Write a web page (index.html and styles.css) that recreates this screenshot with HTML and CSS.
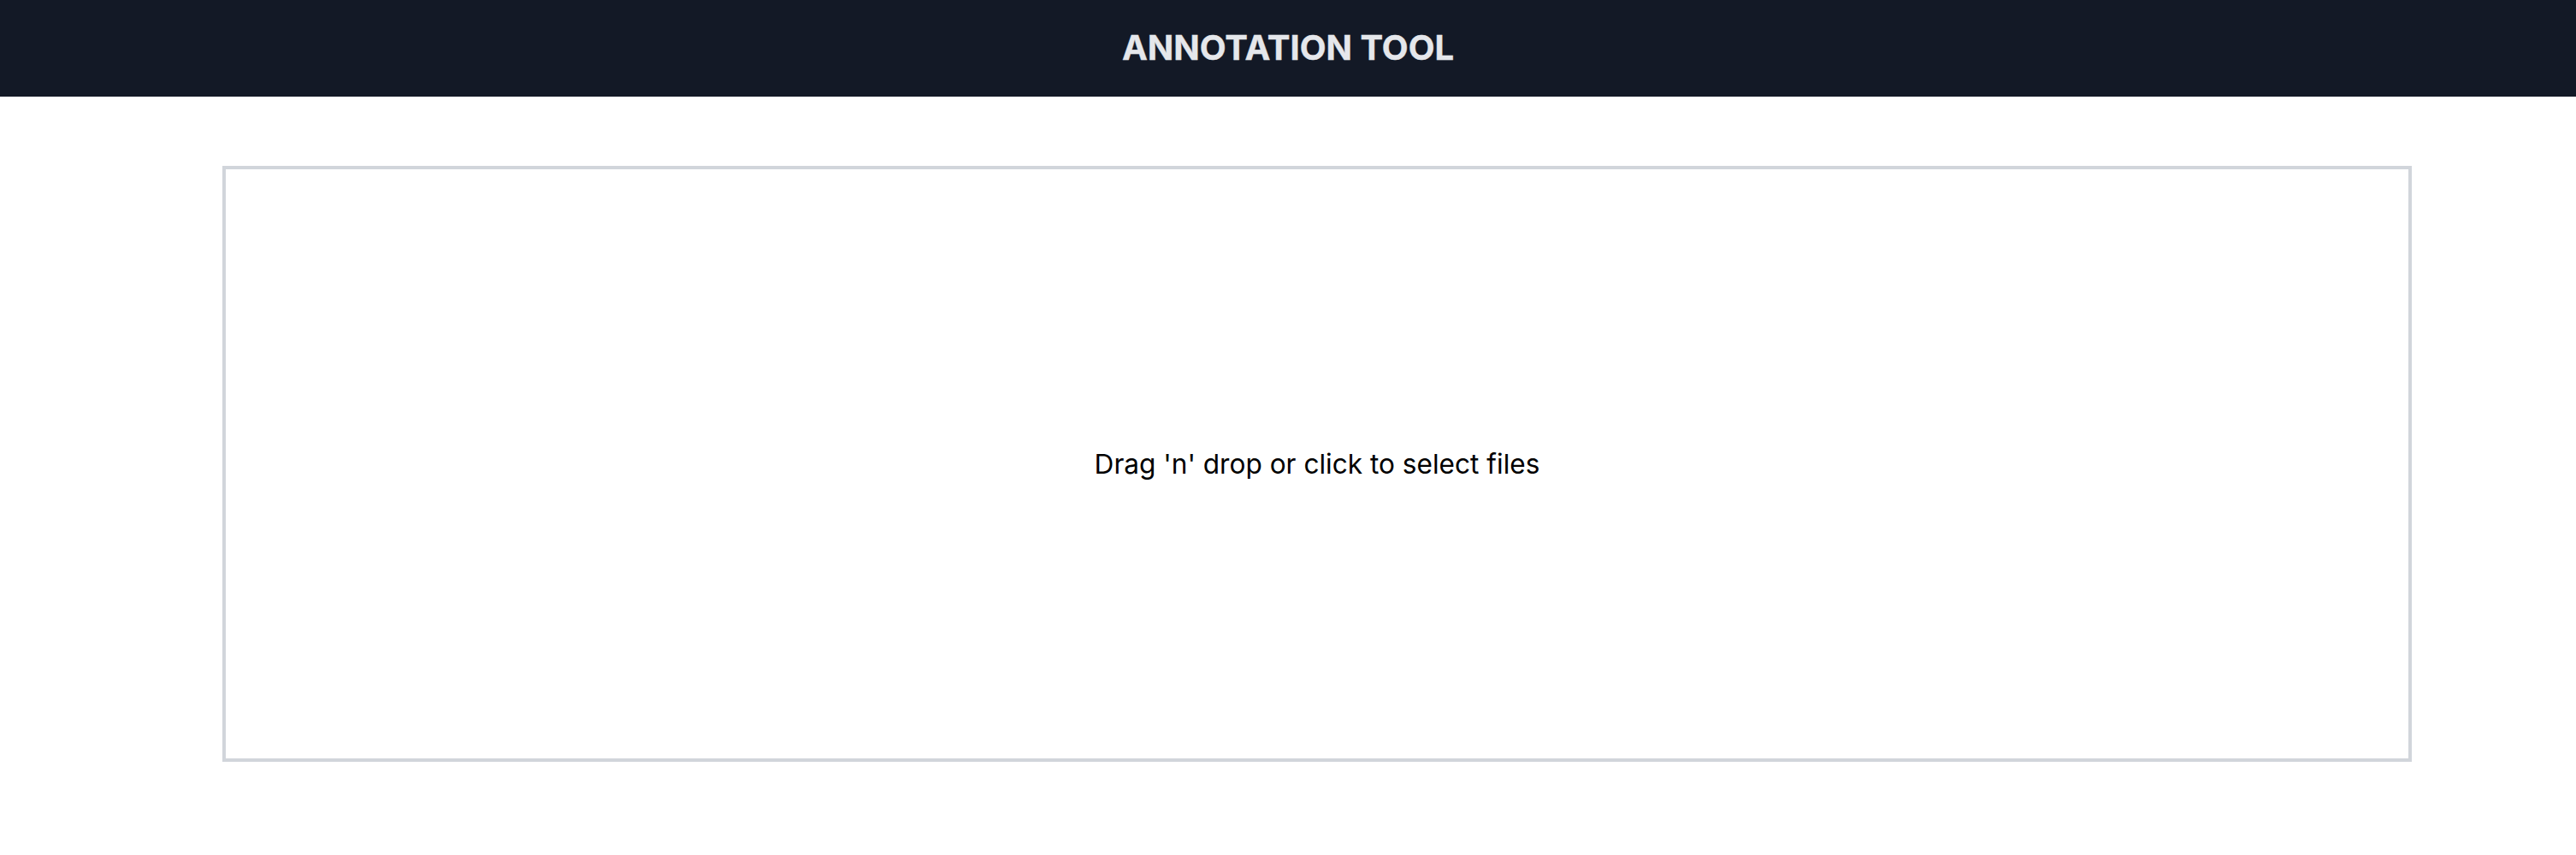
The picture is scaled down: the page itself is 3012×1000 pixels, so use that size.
FILE: index.html
```html
<!DOCTYPE html>
<html>
<head>
<meta charset="utf-8">
<link rel="stylesheet" href="styles.css">
</head>
<body>
<header class="topbar"><h1 class="title">ANNOTATION TOOL</h1></header>
<main class="content">
  <div class="dropzone"><p class="hint">Drag 'n' drop or click to select files</p></div>
</main>
</body>
</html>
```
FILE: styles.css
```css
html, body { margin: 0; padding: 0; background: #fff; }
body { font-family: Inter, "Noto Sans", sans-serif; }
.topbar {
  height: 113px;
  box-sizing: border-box;
  padding-bottom: 3px;
  background: #131926;
  display: flex;
  align-items: center;
  justify-content: center;
}
.title {
  margin: 0;
  color: #e5e7eb;
  font-size: 40px;
  font-weight: 700;
  letter-spacing: 0;
  -webkit-text-stroke: 0.4px #e5e7eb;
}
.content {
  padding: 81px 192px 0 260px;
}
.dropzone {
  height: 689px;
  border: 4px solid #d1d5db;
  display: flex;
  align-items: center;
  justify-content: center;
}
.hint {
  margin: 0;
  font-size: 31.6px;
  color: #000;
}
```
